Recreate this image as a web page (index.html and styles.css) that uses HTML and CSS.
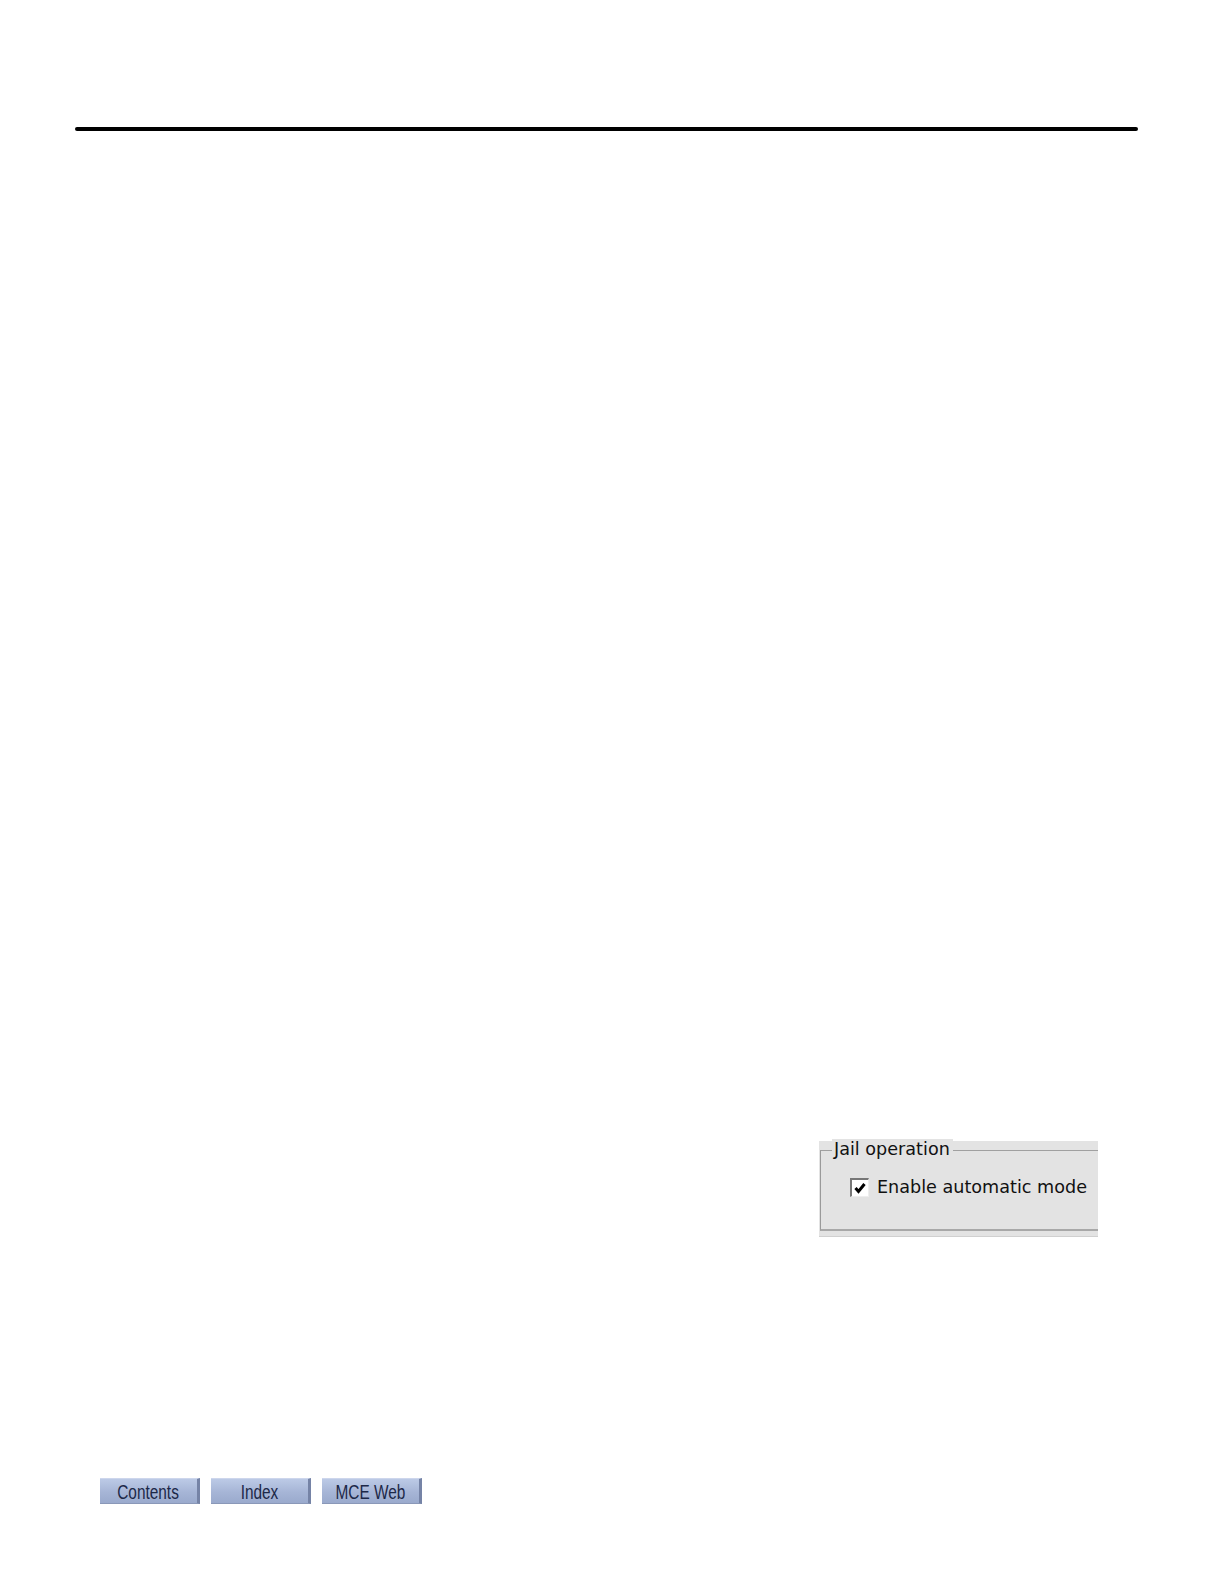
FILE: index.html
```html
<!DOCTYPE html>
<html>
<head>
<meta charset="utf-8">
<link rel="stylesheet" href="styles.css">
</head>
<body>
<div class="page">
  <div class="rule"></div>
  <div class="content">
    <div class="shot">
      <div class="group">
        <div class="legend">Jail operation</div>
        <label class="check"><span class="box"><svg width="14" height="14" viewBox="0 0 14 14"><path d="M2.5 7 L5.5 10.5 L11.5 3" fill="none" stroke="#000" stroke-width="3"/></svg></span><span class="lbl">Enable automatic mode</span></label>
      </div>
    </div>
  </div>
  <div class="nav">
    <div class="btn"><span>Contents</span></div>
    <div class="btn"><span>Index</span></div>
    <div class="btn"><span>MCE Web</span></div>
  </div>
</div>
</body>
</html>
```

FILE: styles.css
```css
html, body { margin: 0; padding: 0; background: #fff; }
.page { width: 1224px; height: 1584px; position: relative; }
.rule { position: absolute; left: 75px; top: 127px; width: 1063px; height: 4px; background: #000; border-radius: 2px; }
.content { position: absolute; left: 819px; top: 1141px; }
.shot { width: 279px; height: 96px; background: #e3e3e3; position: relative; border-bottom: 1px solid #d0d0d0; box-sizing: border-box; }
.group { position: absolute; left: 1px; top: 9px; right: 0; height: 81px; border-left: 1px solid #9a9a9a; border-top: 1px solid #a0a0a0; border-bottom: 2px solid #a8a8a8; box-sizing: border-box; }
.legend { position: absolute; left: 11px; top: -12px; background: #e3e3e3; padding: 0 3px 0 2px; font-family: "DejaVu Sans", sans-serif; font-size: 17.6px; color: #111; line-height: 20px; }
.check { position: absolute; left: 29px; top: 26px; display: flex; align-items: center; gap: 8px; font-family: "DejaVu Sans", sans-serif; font-size: 17.6px; color: #111; }
.box { width: 16px; height: 16px; background: #fff; border-top: 2px solid #777; border-left: 2px solid #777; border-right: 1px solid #eee; border-bottom: 1px solid #eee; display: flex; align-items: center; justify-content: center; box-sizing: content-box; }
.nav { position: absolute; left: 100px; top: 1478px; display: flex; gap: 11px; }
.btn { width: 100px; height: 26px; box-sizing: border-box; background: linear-gradient(#bccae6, #a6b5d6 55%, #9aaacd); border-right: 3px solid #7583a6; border-bottom: 1px solid #8a98b8; border-top: 1px solid #cdd6ec; font-family: "Liberation Sans", Arial, sans-serif; font-size: 20px; color: #1c2848; text-align: center; line-height: 26px; overflow: hidden; }
.btn span { display: inline-block; transform: scaleX(0.77); transform-origin: center; white-space: nowrap; }
```
